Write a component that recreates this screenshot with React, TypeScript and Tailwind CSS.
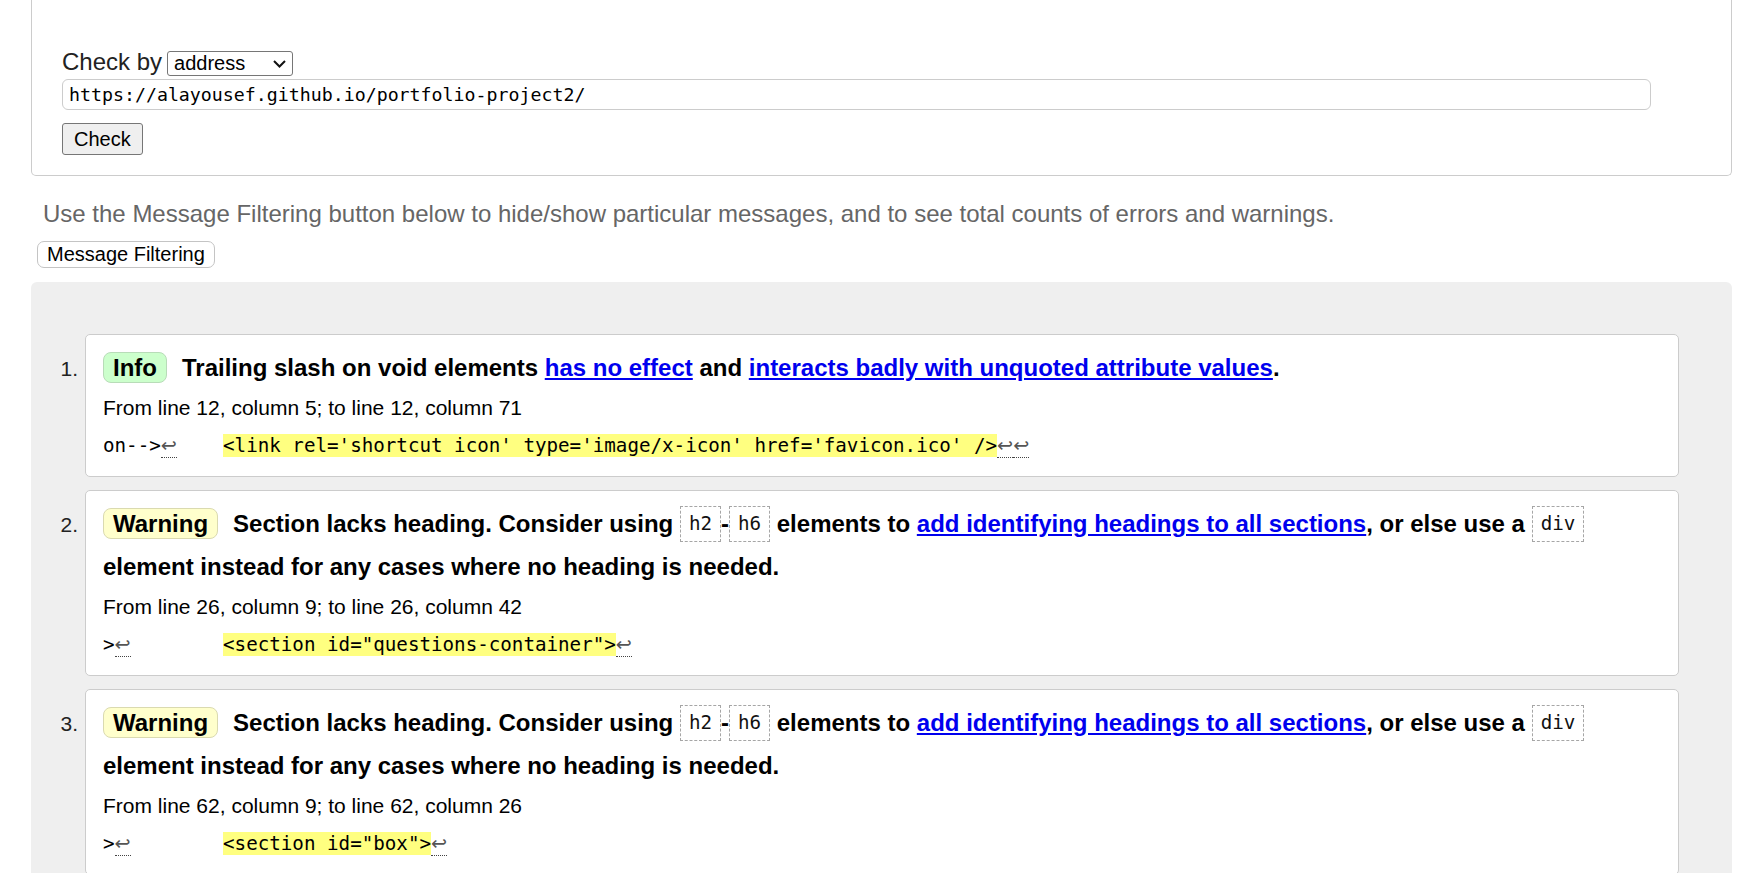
import React from "react";

const LF = () => (
  <span className="border-b border-dotted border-[#444444] font-['DejaVu_Sans',sans-serif] text-[#555555]">↩</span>
);

const Hl = ({ children }: { children: React.ReactNode }) => (
  <span className="bg-[#ffff80]">{children}</span>
);

const Code = ({ children }: { children: React.ReactNode }) => (
  <code className="inline-block align-[2px] border border-dashed border-[#a6a6a6] px-[8px] py-[6px] font-['DejaVu_Sans_Mono',monospace] text-[19.2px] font-normal leading-[22px] text-[#111111]">
    {children}
  </code>
);

const A = ({ children }: { children: React.ReactNode }) => (
  <a href="#" className="text-[#0000ee] underline">
    {children}
  </a>
);

function InfoBadge() {
  return (
    <span className="mr-[15px] inline-block rounded-[8px] border border-[#b8dcb8] bg-[#ccffcc] px-[9px] py-px leading-[27px]">
      Info
    </span>
  );
}

function WarnBadge() {
  return (
    <span className="mr-[15px] inline-block rounded-[8px] border border-[#dadab0] bg-[#ffffcc] px-[9px] py-px leading-[27px]">
      Warning
    </span>
  );
}

function Card({
  n,
  heading,
  from,
  code,
}: {
  n: number;
  heading: React.ReactNode;
  from: string;
  code: React.ReactNode;
}) {
  return (
    <div className="flex">
      <div className="w-[54px] shrink-0 pr-[7px] pt-[13px] text-right text-[21px] leading-[43px] text-[#222222]">
        {n}.
      </div>
      <div className="flex-1 rounded-[5px] border border-[#cccccc] bg-white pb-[18px] pl-[17px] pr-[17px] pt-[11px]">
        <div className="text-[24px] font-bold leading-[43px] text-black">{heading}</div>
        <div className="mt-[7px] text-[21px] leading-[24px] text-black">{from}</div>
        <div className="mt-[14px] whitespace-pre font-['DejaVu_Sans_Mono',monospace] text-[19.2px] leading-[24px] text-black">
          {code}
        </div>
      </div>
    </div>
  );
}

const warnHeading = (
  <>
    <WarnBadge />
    Section lacks heading. Consider using <Code>h2</Code>-<Code>h6</Code> elements to{" "}
    <A>add identifying headings to all sections</A>, or else use a <Code>div</Code> element instead for
    any cases where no heading is needed.
  </>
);

export default function App() {
  return (
    <div className="h-[873px] overflow-hidden bg-white font-['Liberation_Sans',Arial,sans-serif]">
      <div className="ml-[31px] w-[1701px]">
        {/* form box */}
        <div className="rounded-b-[5px] border border-t-0 border-[#cccccc] pb-[20px] pl-[30px] pt-[48px]">
          <div className="text-[24px] leading-[28px] text-[#222222]">
            Check by
            <span className="ml-[5px] inline-flex h-[25px] w-[126px] items-center justify-between rounded-[3px] border border-[#767676] bg-white pl-[6px] pr-[6px] text-[20px] leading-[23px] text-black">
              <span>address</span>
              <svg width="13" height="8" viewBox="0 0 13 8" fill="none">
                <path d="M1 1 L6.5 6.5 L12 1" stroke="#111111" strokeWidth="2" />
              </svg>
            </span>
          </div>
          <div className="mt-[3px] flex h-[31px] w-[1589px] items-center rounded-[6px] border border-[#cccccc] pl-[6px] font-['DejaVu_Sans_Mono',monospace] text-[18.25px] text-black">
            https://alayousef.github.io/portfolio-project2/
          </div>
          <button className="mt-[13px] block h-[32px] rounded-[3px] border border-[#767676] bg-[#efefef] px-[11px] text-[20px] leading-[28px] text-black">
            Check
          </button>
        </div>

        <p className="ml-[12px] mt-[24px] text-[24px] leading-[28px] text-[#666666]">
          Use the Message Filtering button below to hide/show particular messages, and to see total counts of
          errors and warnings.
        </p>
        <button className="ml-[6px] mt-[13px] block h-[27px] rounded-[7px] border border-[#c4c4c4] bg-white px-[9px] text-[20px] leading-[25px] text-black">
          Message Filtering
        </button>

        {/* results */}
        <div className="mt-[14px] flex flex-col gap-[13px] rounded-[6px] bg-[#efefef] pb-[40px] pr-[53px] pt-[52px]">
          <Card
            n={1}
            heading={
              <>
                <InfoBadge />
                Trailing slash on void elements <A>has no effect</A> and{" "}
                <A>interacts badly with unquoted attribute values</A>.
              </>
            }
            from="From line 12, column 5; to line 12, column 71"
            code={
              <>
                {"on-->"}
                <LF />
                {"    "}
                <Hl>{"<link rel='shortcut icon' type='image/x-icon' href='favicon.ico' />"}</Hl>
                <LF />
                <LF />
              </>
            }
          />
          <Card
            n={2}
            heading={warnHeading}
            from="From line 26, column 9; to line 26, column 42"
            code={
              <>
                {">"}
                <LF />
                {"        "}
                <Hl>{'<section id="questions-container">'}</Hl>
                <LF />
              </>
            }
          />
          <Card
            n={3}
            heading={warnHeading}
            from="From line 62, column 9; to line 62, column 26"
            code={
              <>
                {">"}
                <LF />
                {"        "}
                <Hl>{'<section id="box">'}</Hl>
                <LF />
              </>
            }
          />
        </div>
      </div>
    </div>
  );
}
